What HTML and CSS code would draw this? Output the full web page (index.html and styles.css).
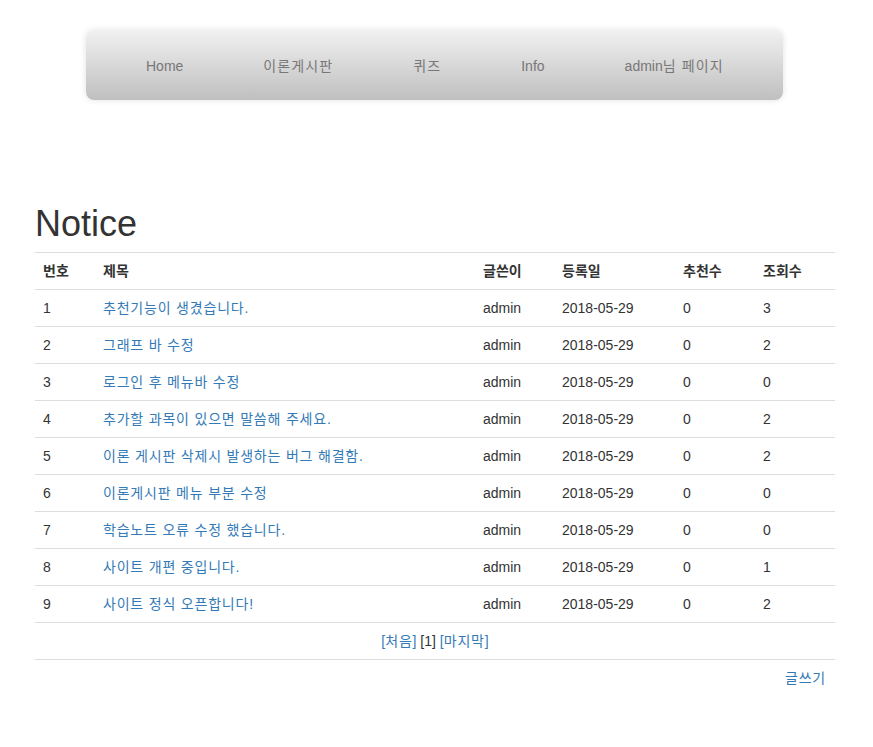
FILE: index.html
```
<!DOCTYPE html>
<html lang="ko">
<head>
<meta charset="utf-8">
<title>Notice</title>
<link rel="stylesheet" href="styles.css">
</head>
<body>
<div class="page">
  <nav class="topnav">
    <ul class="menu">
      <li><a href="#">Home</a></li>
      <li><a href="#"><span class="ko">이론게시판</span></a></li>
      <li><a href="#"><span class="ko">퀴즈</span></a></li>
      <li><a href="#">Info</a></li>
      <li><a href="#">admin<span class="ko">님 페이지</span></a></li>
    </ul>
  </nav>
  <div class="content">
    <h1 class="title">Notice</h1>
    <table class="board">
      <colgroup>
        <col class="c-no"><col class="c-title"><col class="c-writer"><col class="c-date"><col class="c-rec"><col class="c-view">
      </colgroup>
      <thead>
        <tr><th>번호</th><th>제목</th><th>글쓴이</th><th>등록일</th><th>추천수</th><th>조회수</th></tr>
      </thead>
      <tbody>
        <tr><td>1</td><td><a class="ko" href="#">추천기능이 생겼습니다.</a></td><td>admin</td><td>2018-05-29</td><td>0</td><td>3</td></tr>
        <tr><td>2</td><td><a class="ko" href="#">그래프 바 수정</a></td><td>admin</td><td>2018-05-29</td><td>0</td><td>2</td></tr>
        <tr><td>3</td><td><a class="ko" href="#">로그인 후 메뉴바 수정</a></td><td>admin</td><td>2018-05-29</td><td>0</td><td>0</td></tr>
        <tr><td>4</td><td><a class="ko" href="#">추가할 과목이 있으면 말씀해 주세요.</a></td><td>admin</td><td>2018-05-29</td><td>0</td><td>2</td></tr>
        <tr><td>5</td><td><a class="ko" href="#">이론 게시판 삭제시 발생하는 버그 해결함.</a></td><td>admin</td><td>2018-05-29</td><td>0</td><td>2</td></tr>
        <tr><td>6</td><td><a class="ko" href="#">이론게시판 메뉴 부분 수정</a></td><td>admin</td><td>2018-05-29</td><td>0</td><td>0</td></tr>
        <tr><td>7</td><td><a class="ko" href="#">학습노트 오류 수정 했습니다.</a></td><td>admin</td><td>2018-05-29</td><td>0</td><td>0</td></tr>
        <tr><td>8</td><td><a class="ko" href="#">사이트 개편 중입니다.</a></td><td>admin</td><td>2018-05-29</td><td>0</td><td>1</td></tr>
        <tr><td>9</td><td><a class="ko" href="#">사이트 정식 오픈합니다!</a></td><td>admin</td><td>2018-05-29</td><td>0</td><td>2</td></tr>
        <tr class="pager"><td colspan="6"><a href="#">[<span class="ko">처음</span>]</a> [1] <a href="#">[<span class="ko">마지막</span>]</a></td></tr>
      </tbody>
    </table>
    <div class="actions"><a class="ko" href="#">글쓰기</a></div>
  </div>
</div>
</body>
</html>
```
FILE: styles.css
```
html, body {
  margin: 0;
  padding: 0;
  background: #fff;
}
body {
  font-family: "Liberation Sans", Arial, "Noto Sans CJK KR", sans-serif;
  font-size: 14px;
  line-height: 20px;
  color: #333;
}
a {
  color: #337ab7;
  text-decoration: none;
}
.ko {
  letter-spacing: 0.8px;
}
.page {
  padding-top: 30px;
}
.topnav {
  margin-left: 86px;
  width: 697px;
  height: 70px;
  border-radius: 8px;
  background: linear-gradient(to bottom, #f1f1f1 0%, #bfbfbf 100%);
  box-shadow: 0 0 6px rgba(0, 0, 0, 0.12);
}
.menu {
  list-style: none;
  margin: 0;
  padding: 0 0 0 20px;
  display: flex;
  height: 70px;
  align-items: center;
}
.menu li a {
  display: block;
  padding: 2px 40px 0 40px;
  color: #777;
  line-height: 70px;
}
.menu .ko {
  letter-spacing: 1.1px;
}
.content {
  margin-left: 35px;
  width: 800px;
  padding-top: 103px;
}
.title {
  margin: 0 0 8px 0;
  font-size: 36px;
  font-weight: 500;
  line-height: 41px;
}
.board {
  width: 800px;
  border-collapse: collapse;
  table-layout: fixed;
}
.c-no { width: 60px; }
.c-title { width: 380px; }
.c-writer { width: 79px; }
.c-date { width: 121px; }
.c-rec { width: 80px; }
.c-view { width: 80px; }
.board th, .board td {
  padding: 8px;
  text-align: left;
  border-top: 1px solid #ddd;
  line-height: 20px;
  vertical-align: top;
}
.board th {
  font-weight: bold;
}
.board tr:last-child td {
  border-bottom: 1px solid #ddd;
}
.board .pager td {
  text-align: center;
}
.actions {
  text-align: right;
  padding: 8px 9px 8px 8px;
}
```
